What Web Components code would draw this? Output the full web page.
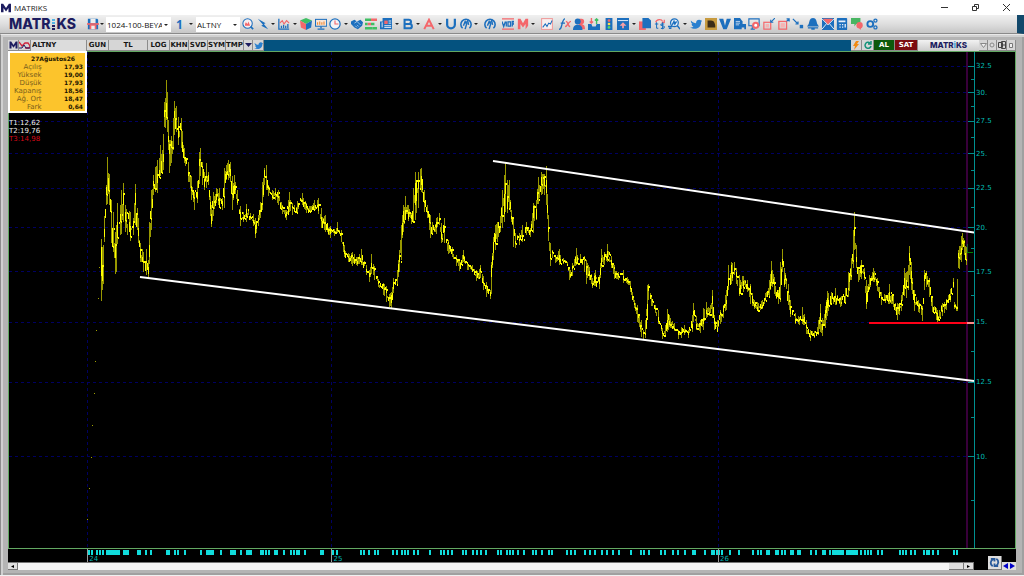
<!DOCTYPE html>
<html lang="tr">
<head>
<meta charset="utf-8">
<title>MATRIKS</title>
<style>
html,body{margin:0;height:100%}
body{font-family:"Open Sans","Noto Sans",sans-serif;background:#fff;overflow:hidden}
</style>
</head>
<body>
<matriks-app></matriks-app>
<script>
const NAVY='#1d1d60', BLUE='#1c6fbe', RED='#f4676b', GREEN='#3fbf63';

const define=(name,html,setup)=>customElements.define(name,class extends HTMLElement{
  constructor(){super();this.attachShadow({mode:'open'});}
  connectedCallback(){
    this.shadowRoot.innerHTML=typeof html==='function'?html(this):html;
    if(setup)setup(this,this.shadowRoot);
  }
});

const ICONS={
save:`<path d="M1 1h11l1 1v11H1z" fill="${BLUE}"/><path d="M4 1h6v5H4z" fill="#eee"/><path d="M3 8h8v5H3z" fill="${RED}"/><path d="M0 6h14v2H0z" fill="${RED}"/><path d="M5 9h4v4H5z" fill="#eee"/>`,
find:`<circle cx="6.500" cy="6.500" r="5.500" fill="#f6eef0" stroke="${BLUE}" stroke-width="1.200"/><path d="M3.500 9V7l1-2 2 2 1-3 2 5z" fill="${RED}"/><path d="M10 10l3 3" stroke="${BLUE}" stroke-width="2"/>`,
bolt:`<path d="M1 1l9 5-2 1 5 6-8-4 2-1z" fill="${BLUE}"/>`,
chart:`<path d="M1 1v12h12" fill="none" stroke="${BLUE}" stroke-width="1.500"/><path d="M4 12V9M6.500 12V8M9 12V9M11.500 12V7" stroke="${BLUE}" stroke-width="1.500"/><path d="M2 6l3-3 2 4 3-4 3 3" fill="none" stroke="${RED}" stroke-width="1.300"/>`,
cube:`<path d="M7 0l7 3-7 4-7-4z" fill="${GREEN}"/><path d="M0 3l7 4v7l-6-3z" fill="${RED}"/><path d="M14 3L7 7v7l6-3z" fill="${BLUE}"/>`,
board:`<rect x="0.600" y="1.600" width="13" height="8" fill="#f8e6d8" stroke="${BLUE}" stroke-width="1.200"/><path d="M3 8V5M5.500 8V4M8 8V5M10.500 8V4" stroke="#f09040" stroke-width="1.400"/><path d="M7 10v2M3 13h8" stroke="${BLUE}" stroke-width="1.600"/>`,
clock:`<circle cx="7" cy="7" r="6" fill="#f4f4f8" stroke="${BLUE}" stroke-width="1.400"/><path d="M7 3v4h4" fill="none" stroke="${RED}" stroke-width="1.300"/>`,
hands:`<path d="M0 4l4-2 3 2 4-2 3 3-1 4-5 4-4-2-4-4z" fill="${BLUE}"/><path d="M4 6l3-2 4 4M5 9l2 2M7 8l2 2" stroke="#d8e6f4" stroke-width=".8" fill="none"/>`,
bars:`<path d="M0 2h7M0 12h9" stroke="${GREEN}" stroke-width="3"/><path d="M7 2h7M3 7h4" stroke="${RED}" stroke-width="3"/><path d="M0 7h3M7 7h4M9 12h5" stroke="${GREEN}" stroke-width="3"/>`,
news:`<path d="M3 0h11v13H0V4h3z" fill="${BLUE}"/><path d="M5 3h4v4H5z" fill="${RED}"/><path d="M10 3.500h3M10 6h3M5 9h8M5 11h8M2.500 5v6" stroke="#fff"/>`,
B:`<path d="M3 2h5a2 2 0 0 1 0 5H3zM3 7h6a2.500 2.500 0 0 1 0 5H3z" fill="none" stroke="${BLUE}" stroke-width="2.400"/>`,
A:`<path d="M1.500 13L7 2l5.500 11M4 9h6" fill="none" stroke="${RED}" stroke-width="2.300"/>`,
U:`<path d="M2.500 1v7a4.500 4 0 0 0 9 0V1" fill="none" stroke="${BLUE}" stroke-width="2.600"/>`,
ring:`<path d="M3 12A6 6 0 1 1 11 12" fill="none" stroke="${BLUE}" stroke-width="1.800"/><path d="M4 9l2-5 1 2 2-3 1 5M8 6l-2 7" fill="none" stroke="${BLUE}" stroke-width="1.700"/>`,
viop:`<path d="M0 1h14M0 13h14" stroke="${RED}" stroke-width="1.400"/><path d="M0 4l2 6 2-6M5 4v6M12 10V4h2v3h-2" fill="none" stroke="${BLUE}" stroke-width="1.500"/><rect x="7" y="4.500" width="3" height="5" fill="none" stroke="${BLUE}" stroke-width="1.500"/>`,
M:`<path d="M1 1h3l3 5 3-5h3v8l-3 4V7l-3 4-3-4v6H1z" fill="${RED}"/>`,
line:`<rect x=".7" y=".7" width="12.600" height="12.600" fill="#f8f0f0" stroke="#ee9a9a" stroke-width="1.200"/><path d="M2 11l3-4 2 3 2-4 2 1 2-4" fill="none" stroke="${BLUE}" stroke-width="1.200"/>`,
fx:`<path d="M0 13c4 1 3-12 7-12M2 6h5" fill="none" stroke="${BLUE}" stroke-width="1.600"/><path d="M8 4c3 0 2 6 5 6M14 4c-3 0-4 6-7 6" stroke="${RED}" stroke-width="1.600" fill="none"/>`,
people:`<path d="M10 1a3 3 0 0 1 0 6c3 1 4 2 4 6H7V1z" fill="${RED}"/><circle cx="5.500" cy="4" r="3.500" fill="${BLUE}"/><path d="M0 14c0-5 3-6 5.500-6s5.500 1 5.500 6z" fill="${BLUE}"/>`,
inbox:`<path d="M0 7h4l1 3h4l1-3h4v7H0z" fill="${BLUE}"/><path d="M4 0v6M2 4l2 2 2-2" fill="none" stroke="${RED}" stroke-width="1.600"/><path d="M10 7V1M8 3l2-2 2 2" fill="none" stroke="${GREEN}" stroke-width="1.600"/>`,
light:`<rect x="3" y="0" width="8" height="14" fill="${BLUE}"/><circle cx="7" cy="3" r="1.600" fill="${RED}"/><circle cx="7" cy="7" r="1.600" fill="#ffe04a"/><circle cx="7" cy="11" r="1.600" fill="#59d95f"/>`,
upbox:`<path d="M0 0h14v14H0z" fill="${BLUE}"/><path d="M1 3h12" stroke="#fff"/><path d="M7 5l4 4H8v3H6V9H3z" fill="#f9a0a4"/>`,
docs:`<path d="M0 4h8v10H0z" fill="${RED}"/><path d="M4 0h7l3 3v9H4z" fill="${BLUE}"/>`,
swap:`<path d="M2 5c1-4 7-4 8-1M12 2v3H9" fill="none" stroke="${RED}" stroke-width="1.400"/><path d="M3 5v7M1 7h4M3 12h2M12 7c-5-1-5 2-2 2s3 4-2 3M10 5v8" fill="none" stroke="${BLUE}" stroke-width="1.200"/>`,
zoom:`<circle cx="7.500" cy="5.500" r="4.500" fill="#eef4fb" stroke="${BLUE}" stroke-width="1.500"/><path d="M5 8l2-4 1 3 2-3M11 9l3 4M0 10h5M1 12h3" fill="none" stroke="${BLUE}" stroke-width="1.700"/>`,
bird:`<path d="M0 11c2 .3 3-.1 4-1C2 9 2 8 2 7h1C1 6 1 4 1 3c2 2 4 3 6 3 0-4 4-5 6-3h1l-1 2c0 6-6 10-13 6z" fill="#2a80cf"/>`,
gold:`<path d="M0 0h14v14H0z" fill="#c79a3e"/><path d="M3 3h4c4 0 5 4 5 8H3z" fill="#3b2c18"/>`,
V:`<path d="M0 1h5l2 8 2-8h5L9 13H5z" fill="${BLUE}"/>`,
docfind:`<path d="M0 0h7l3 4v2L7 13H0z" fill="${BLUE}"/><path d="M2 4h5M2 6h5M2 8h4" stroke="#cfe0f2"/><path d="M8 13V8h2v2h1V8h2v5" fill="none" stroke="${BLUE}" stroke-width="2"/>`,
mongear:`<path d="M1 1h12v8H1zM3 13h5M5 9v4" fill="none" stroke="${BLUE}" stroke-width="1.300"/><circle cx="9" cy="8.500" r="3" fill="#fff" stroke="${RED}" stroke-width="2.400"/>`,
inward:`<rect x="1" y="5" width="8" height="8" fill="none" stroke="${RED}" stroke-width="1.400"/><rect x="3" y="7" width="4" height="4" fill="#f7b2b2"/><path d="M14 0L9 5M9 2v3h3" stroke="${BLUE}" stroke-width="1.300" fill="none"/>`,
outward:`<rect x="1" y="4" width="9" height="9" fill="none" stroke="${RED}" stroke-width="1.500"/><rect x="3" y="6" width="5" height="5" fill="#f7b2b2"/><path d="M10 4l3-3M10 1h3v3" stroke="${BLUE}" stroke-width="1.400" fill="none"/>`,
drag:`<path d="M1 1l6 6M4 7h3V4" fill="none" stroke="${BLUE}" stroke-width="1.400"/><path d="M9 8h4v4H9z" fill="${BLUE}"/>`,
bell:`<path d="M7 0c4 0 4 4 5 7l2 3H0l2-3c1-3 1-7 5-7z" fill="${BLUE}"/><path d="M1 11.500h12M5 13h4" stroke="${BLUE}" stroke-width="1.500"/>`,
mail:`<path d="M0 0h14v14H0z" fill="${BLUE}"/><path d="M1 1h12L7 8z" fill="${RED}"/><path d="M0 1l7 7 7-7M0 13l5-6M14 13L9 7" fill="none" stroke="#fff"/>`,
calc:`<rect x="1" y="0" width="12" height="14" rx="1" fill="${BLUE}"/><path d="M3 3h8v2H3zM4 7h1.500v1.500H4zM7 7h1.500v1.500H7zM10 7h1.500v4H10zM4 10h1.500v1.500H4zM7 10h1.500v1.500H7z" fill="#e8f0fa"/>`,
chat:`<path d="M0 0h11v7H6l-2 3V7H0z" fill="#48b562"/><circle cx="10" cy="8.500" r="3.700" fill="${RED}"/><path d="M9 11h3l-1 3z" fill="${RED}"/>`,
gears:`<circle cx="5" cy="7" r="3.400" fill="none" stroke="${BLUE}" stroke-width="2.200"/><circle cx="11" cy="3" r="1.800" fill="none" stroke="${BLUE}" stroke-width="1.500"/><circle cx="11" cy="11" r="1.800" fill="none" stroke="${BLUE}" stroke-width="1.500"/>`,
mark:`<path d="M0 13V1h3l4 6 4-6h3v12h-3.500V7L7 12 3.500 7v6z" fill="${NAVY}"/>`,
dots:`<path d="M0 0h3v2H0zM0 3h3v2H0z" fill="#52b4e6"/><path d="M0 6h3v2H0zM0 9h3v2H0z" fill="${NAVY}"/>`
};
const icon=(n,s=12)=>`<svg width="${s}" height="${s}" viewBox="0 0 14 14" aria-hidden="true">${ICONS[n]}</svg>`;

/* A toolbar button; "menu" adds the drop-down arrow. */
define('tool-button',el=>{
  const menu=el.hasAttribute('menu');
  return `<style>
  :host{display:block;flex:${menu?65:44} 1 0;min-width:0}
  button{all:unset;display:flex;width:100%;height:100%;align-items:center}
  svg{flex:none;margin:0 1px}
  i{margin-left:auto;margin-right:2px;border:2px solid transparent;border-top-color:#222;border-bottom:0}
  </style><button aria-label="${el.getAttribute('icon')}">${icon(el.getAttribute('icon'))}${menu?'<i></i>':''}</button>`;
});

/* Compact drop-down list used in the toolbar. */
define('tool-select',el=>`<style>
  :host{display:flex;flex:none;position:relative;background:#fff;height:15px}
  select{all:unset;box-sizing:border-box;width:100%;padding:0 9px 0 1px;font:8px/15px "Open Sans",sans-serif;color:#111;overflow:hidden;white-space:nowrap;text-overflow:clip}
  i{position:absolute;right:3px;top:7px;border:2px solid transparent;border-top-color:#222;border-bottom:0;pointer-events:none}
  </style><select aria-label="${el.getAttribute('label')}"><option>${el.getAttribute('value')}</option></select><i></i>`);

define('title-bar',`<style>
  :host{display:flex;height:15px;flex:none;align-items:center;background:#fff;color:#222;font-size:8px;line-height:15px;padding-right:2px}
  span{flex:1;padding-left:3px}
  .mark{flex:none;margin-left:1px}
  button{all:unset;width:31px;height:15px;display:grid;place-items:center}
  </style><svg class="mark" width="10" height="10" viewBox="0 0 14 14">${ICONS.mark}</svg><span>MATRIKS</span>
  <button aria-label="Simge durumu"><svg width="7" height="7"><path d="M0 3.500h7" stroke="#333"/></svg></button>
  <button aria-label="Geri yükle"><svg width="7" height="7" fill="none" stroke="#333"><path d="M.5 2.500h4v4h-4zM2.500 2V.5h4v4H5"/></svg></button>
  <button aria-label="Kapat"><svg width="7" height="7"><path d="M0 0l7 7M7 0L0 7" stroke="#333"/></svg></button>`);

const tools=`find bolt+ chart+ cube board clock+ hands bars news+ B+ A+ U ring+ | ring | viop M+ | line | fx people inbox light upbox+ docs swap zoom+ bird gold V docfind mongear inward outward drag bell mail calc chat gears`.split(' ');
define('main-toolbar',`<style>
  :host{display:flex;height:19px;flex:none;align-items:center;box-sizing:border-box;padding-left:9px;
    background:linear-gradient(#f0f0f0,#dedede 50%,#c6c6c6);border-right:7px solid #12486b;border-bottom:1px solid #8a8a8a}
  .logo{display:flex;flex:none;align-items:center;width:77px;color:${NAVY};font:800 14px/18px Inter,"Open Sans",sans-serif}
  .logo svg{margin:0 1px 0 2px}
  .save{flex:none;width:20px;height:15px}
  .list{width:65px}.num{flex:none;width:20px;display:flex;align-items:center;justify-content:space-between;margin-left:5px;color:${BLUE};font:700 12px/15px "Open Sans",sans-serif;box-sizing:border-box}
  .num i{margin-right:3px;border:2px solid transparent;border-top-color:#222;border-bottom:0}
  .sym{width:44px}
  nav{display:flex;flex:0 1 638px;height:15px;min-width:0;margin-left:1px}
  nav span{flex:9 1 0}
  </style>
  <div class="logo">MATR<svg width="3" height="11">${ICONS.dots}</svg>KS</div>
  <tool-button class="save" icon="save" menu></tool-button>
  <tool-select class="list" label="Sayfa" value="1024-100-BEYAZ"></tool-select>
  <div class="num">1<i></i></div>
  <tool-select class="sym" label="Sembol" value="ALTNY"></tool-select>
  <nav>${tools.map(t=>t==='|'?'<span></span>':`<tool-button icon="${t.replace('+','')}"${t.endsWith('+')?' menu':''}></tool-button>`).join('')}</nav>`);

define('chart-header',`<style>
  :host{display:flex;height:11px;flex:none;background:#04527f;font:700 7px/11px "DejaVu Sans",sans-serif;color:#161616}
  button,.icon{all:unset;box-sizing:border-box;height:11px;flex:none;display:grid;place-items:center;background:#d6d6d6;border-right:1px solid #8c8c8c;border-bottom:1px solid #8c8c8c;line-height:10px}
  input{all:unset;width:56px;height:11px;background:#dcdcdc;border-bottom:0;padding-left:1px;box-sizing:border-box;border-right:1px solid #8c8c8c}
  .w9{width:9px}.w10{width:10px}.w11{width:11px}.w12{width:12px}.w17{width:18px}.w19{width:19px}.w21{width:22px}.w39{width:39px}
  .gap{flex:1}
  .al{width:21px;background:#0c590c;color:#fff}.sat{width:23px;background:#7c0c10;color:#fff}
  .brand{width:61px;background:linear-gradient(#f2f2f2,#ccc);color:${NAVY};display:flex;align-items:center;justify-content:center;font:800 8px/11px Inter,"Open Sans",sans-serif}
  .brand b{color:#4fa8dc}
  </style>
  <span class="icon w11"><svg width="9" height="8" viewBox="0 0 14 14">${ICONS.mark}</svg></span>
  <span class="icon w12"><svg width="11" height="9" viewBox="0 0 11 9" fill="none"><path d="M0 1l3 4 3-3 3 0 2 3-1 2H6" stroke="#d0243c" stroke-width="1.300"/><path d="M0 7h3l2-3 2 3h4" stroke="${NAVY}"/></svg></span>
  <input aria-label="Sembol" value="ALTNY">
  <button class="w21">GUN</button><button class="w39">TL</button><button class="w21">LOG</button><button class="w19">KHN</button><button class="w19">SVD</button><button class="w17">SYM</button><button class="w17">TMP</button>
  <button class="w9" aria-label="Menü"><svg width="7" height="4"><path d="M0 0h7L3.500 4z" fill="${NAVY}"/></svg></button>
  <button class="w11" aria-label="Twitter"><svg width="9" height="9" viewBox="0 0 14 14">${ICONS.bird}</svg></button>
  <span class="gap"></span>
  <button class="w11" aria-label="Hızlı emir"><svg width="8" height="9" viewBox="0 0 8 9"><path d="M4 0h3L5 3h2L2 9l1-4H1z" fill="#f08a12"/></svg></button>
  <button class="w12" aria-label="Yenile"><svg width="8" height="8" viewBox="0 0 8 8"><path d="M6 2a3 3 0 1 0 1 3M7 0v3H4" fill="none" stroke="#14937a" stroke-width="1.500"/></svg></button>
  <button class="al">AL</button><button class="sat">SAT</button><span class="brand">MATR<b>i</b>KS</span>
  <button class="w9" aria-label="Küçült"><svg width="7" height="5"><path d="M.5.5h6l-3 4z" fill="#eee" stroke="#888"/></svg></button>
  <button class="w9" aria-label="Sabitle"><svg width="6" height="6"><circle cx="3" cy="3" r="2" fill="#ddd" stroke="#888"/></svg></button>
  <button class="w10" aria-label="Büyüt"><svg width="8" height="8" fill="none" stroke="#444"><path d="M.5 1.500h4v5h-4zM3.500.5h4v7h-4zM4 4h4"/></svg></button>
  <button class="w9" aria-label="Kapat"><svg width="6" height="7"><path d="M1.500 1.500h3v4h-3z" fill="#eee" stroke="#777"/></svg></button>`);

define('price-card',`<style>
  :host{display:block;box-sizing:border-box;width:79px;padding:2px 3px 1px 5px;border:1px solid #fff;outline:1px solid #fff;outline-offset:-2px;background:#fcc42c;color:#1c1400}
  table{border-collapse:collapse;width:100%}
  caption{font:700 6px/9px "DejaVu Sans",sans-serif;padding-left:9px}
  th{width:27px;padding:0;text-align:right;font:400 7px/8px "DejaVu Sans",sans-serif;color:#7a5f1c;white-space:nowrap}
  td{padding:0;text-align:right;font:700 6px/8px "DejaVu Sans",sans-serif}
  </style><table><caption>27Ağustos26</caption>
  ${[['Açılış','17,93'],['Yüksek','19,00'],['Düşük','17,93'],['Kapanış','18,56'],['Ağ. Ort','18,47'],['Fark','0,64']].map(r=>`<tr><th scope="row">${r[0]}</th><td>${r[1]}</td></tr>`).join('')}</table>`);

/* Price range [x, top, bottom] along the session axis. */
const RANGE=[
[101,239,301],[103,245,284],[104,216,242],[106,185,205],[107,157,204],[109,174,205],[111,200,243],[113,212,252],[115,232,274],[116,225,272],[117,203,244],[120,205,235],[121,190,234],[123,183,222],[125,205,232],[130,212,241],[133,218,235],[135,184,225],[137,208,230],[138,218,243],[140,243,262],[143,252,272],[146,249,275],[148,260,277],[149,222,264],[151,190,230],[153,175,195],[155,167,192],[157,160,193],[159,158,178],[160,145,176],[162,150,172],[163,134,170],[164,102,127],[165,98,128],[166,80,120],[167,92,132],[168,120,150],[169,140,173],[171,136,163],[173,118,150],[174,101,135],[176,106,132],[178,117,145],[181,118,148],[184,148,163],[188,162,182],[191,176,200],[194,192,210],[197,181,203],[199,152,184],[200,148,176],[202,162,185],[204,172,190],[206,163,188],[208,172,185],[210,196,216],[211,205,227],[213,192,216],[216,188,203],[219,188,208],[222,198,210],[224,168,208],[226,165,180],[228,160,180],[230,162,182],[232,176,210],[234,175,194],[237,190,205],[240,206,226],[243,212,222],[246,204,222],[250,213,220],[253,214,226],[255,218,238],[258,215,226],[260,202,218],[262,182,210],[264,168,185],[266,165,190],[268,185,196],[272,190,200],[275,188,200],[278,190,205],[282,205,214],[286,210,220],[289,192,212],[292,203,215],[297,201,212],[302,193,205],[306,203,213],[310,206,213],[314,200,209],[318,198,214],[321,208,228],[325,215,232],[330,226,238],[334,229,236],[337,222,233],[341,230,242],[344,245,257],[348,253,262],[352,252,266],[357,257,266],[361,249,265],[366,265,275],[369,270,282],[371,254,274],[374,266,280],[378,279,287],[383,283,295],[386,286,302],[389,294,307],[391,292,308],[393,278,293],[397,270,285],[399,250,272],[401,225,260],[403,205,232],[405,196,220],[408,205,221],[411,213,224],[413,188,223],[415,172,220],[418,172,208],[420,169,190],[421,168,192],[424,190,212],[427,205,218],[430,215,238],[432,222,234],[436,218,234],[439,213,225],[441,223,243],[444,218,243],[448,240,254],[452,247,257],[456,255,266],[459,260,271],[463,250,262],[467,262,270],[472,265,272],[476,270,281],[480,265,278],[483,276,290],[486,282,297],[490,290,299],[491,262,294],[493,237,260],[495,225,250],[497,222,242],[500,216,232],[502,190,228],[504,175,222],[505,163,212],[507,180,213],[509,180,208],[511,210,222],[513,218,247],[515,233,248],[519,233,245],[522,225,242],[526,222,235],[530,228,237],[533,203,233],[536,200,220],[538,177,204],[541,172,195],[544,174,195],[546,166,205],[548,215,241],[550,243,266],[552,250,258],[555,257,263],[559,249,265],[563,258,264],[567,262,266],[569,268,280],[572,263,276],[576,248,265],[580,254,263],[584,256,272],[586,260,284],[589,267,280],[592,278,288],[595,270,286],[599,275,289],[601,249,268],[604,252,265],[607,244,262],[611,256,268],[614,265,279],[618,272,280],[623,270,283],[627,277,284],[630,281,292],[634,300,308],[637,305,322],[641,320,337],[643,330,339],[645,320,338],[647,285,320],[648,284,300],[651,295,306],[655,305,313],[658,310,324],[662,328,339],[665,325,335],[667,309,332],[670,318,328],[674,323,331],[678,330,339],[681,327,338],[684,325,335],[688,330,338],[692,315,332],[693,303,322],[696,316,330],[700,320,333],[703,308,330],[706,302,318],[709,308,316],[712,290,318],[714,315,330],[717,320,332],[720,310,324],[723,305,318],[726,290,310],[728,265,290],[731,262,284],[734,262,275],[736,268,284],[739,275,296],[743,276,292],[747,280,292],[750,284,304],[754,300,309],[758,303,311],[762,300,309],[765,293,301],[769,280,298],[771,261,286],[774,277,294],[778,290,304],[780,262,302],[782,249,272],[784,268,287],[788,284,305],[790,300,317],[795,313,324],[799,317,325],[802,307,324],[806,320,334],[810,330,341],[814,331,338],[818,320,335],[820,304,332],[822,318,336],[825,306,328],[827,291,316],[831,292,305],[835,288,305],[840,297,307],[845,288,303],[848,272,297],[851,258,280],[853,230,268],[854,212,250],[856,245,268],[858,268,282],[861,260,279],[864,268,280],[866,280,309],[869,275,290],[873,268,282],[877,278,291],[881,292,305],[885,295,303],[889,284,304],[893,294,307],[897,303,320],[901,295,311],[904,268,296],[906,272,298],[908,265,290],[909,246,275],[911,262,290],[914,290,311],[918,300,312],[922,306,321],[924,270,290],[926,271,287],[929,278,297],[932,298,312],[936,308,320],[937,310,324],[942,303,316],[946,299,310],[950,289,302],[953,278,288],[954,302,309],[956,306,311],[957,279,311],[958,250,268],[959,246,269],[961,236,262],[962,233,250],[964,240,255],[966,247,265]];

/* Wicks are one pixel wide; bodies step sideways in blocks of one to three pixels. */
function candles(){
  let seed=9127,dim='',lit='';
  const rnd=()=>(seed=(seed*1103515245+12345)&0x7fffffff)/0x7fffffff;
  let held=0,a=0,b=0;
  for(let k=0;k<RANGE.length;k++){
    const [x0,h0,l0]=RANGE[k],[x1,h1,l1]=RANGE[k+1]||[x0+1,h0,l0];
    for(let x=x0;x<x1;x++){
      const t=(x-x0)/(x1-x0),h=h0+(h1-h0)*t,l=l0+(l1-l0)*t,s=l-h;
      const key=x===x0,top=key?h:h+s*rnd()*.6,bot=key?l:l-s*rnd()*.5;
      if(key||rnd()<.7)dim+=`M${x}.5 ${Math.round(top)}V${Math.round(Math.max(bot,top+2))}`;
      if(held<=0||a<h-2||b>l+2){
        held=1+Math.floor(rnd()*3);
        a=Math.round(h+s*(.1+rnd()*.5));
        b=Math.round(Math.min(l,a+Math.max(2,s*(.2+rnd()*.3))));
        lit+=`M${x} ${a}h1V${b}h-1z`;
      }else lit+=`M${x} ${rnd()<.5?a:b-1}h1v2h-1z`;
      held--;
    }
  }
  return `<path d="${dim}" stroke="#989800"/><path d="${lit}" fill="#ff0"/>`;
}
const priceY=p=>Math.round(457-Math.log(p/10)*331)-.5;
const LEVELS=[32.5,30,27.5,25,22.5,20,17.5,15,12.5,10];
const MINOR=[31.25,28.75,26.25,23.75,21.25,18.75,16.25,13.75,11.25,8.75];

define('price-chart',`<style>
  :host{display:flex;flex:1;min-height:0;position:relative;background:#000;border:1px solid #62a862;box-sizing:border-box}
  .plot{flex:1;min-width:0;height:100%;display:block}
  .axis{flex:none;width:41px;position:relative;border-left:1px solid #009090;box-sizing:border-box;color:#00bcb4;font:7px/8px "DejaVu Sans",sans-serif}
  .axis span{position:absolute;left:1px;margin-top:-4px}
  .info{position:absolute;left:0;top:0}
  price-card{margin-top:-1px;margin-left:-1px}
  p{margin:0;font:7px/8px "DejaVu Sans",sans-serif;color:#eee}
  .stops{padding-top:6px}
  .stop{color:#d80a18}
  </style>
  <svg class="plot" viewBox="9 52 965 496" preserveAspectRatio="none" fill="none" role="img" aria-label="ALTNY fiyat grafiği">
  <g stroke="#000062" stroke-dasharray="3 3">${LEVELS.map(p=>`<path d="M9 ${priceY(p)}H967"/>`).join('')}<path d="M87.500 52V548"/><path d="M331.500 52V548"/><path d="M718.500 52V548"/></g>
  <path d="M967 52V548" stroke="#38003a" stroke-width="2"/>
  <g stroke="#008c8c">${LEVELS.map(p=>`<path d="M968 ${priceY(p)}h6"/>`).join('')}${MINOR.map(p=>`<path d="M971 ${priceY(p)}h3"/>`).join('')}</g>
  <g fill="#a3a300">${[[96,330],[95,361],[94,393],[92,425],[91,457],[89,488],[87,519],[99,267],[98,298]].map(([x,y])=>`<path d="M${x} ${y}h1v1h-1z"/>`).join('')}</g>
  ${candles()}
  <path d="M493 161L974 232.500M140 277L974 381" stroke="#fff" stroke-width="2"/>
  <path d="M869 323H967" stroke="#ff0018" stroke-width="2"/><path d="M967 323h7" stroke="#f88" stroke-width="2"/>
  <path d="M967.500 244V252" stroke="#1c5c30" stroke-width="1"/><path d="M967 252.500h6" stroke="#008000"/>
  </svg>
  <div class="axis">${LEVELS.map(p=>`<span style="top:${((priceY(p)-52)/4.96).toFixed(1)}%">${p%1?p:p+'.'}</span>`).join('')}</div>
  <div class="info"><price-card></price-card><div class="stops"><p>T1:12,62</p><p>T2:19,76</p><p class="stop">T3:14,98</p></div></div>`);

const EVENTS=[88,91,96,99,102,106,108,110,112,114,116,118,123,125,127,137,139,145,150,166,168,174,177,184,200,206,208,210,212,220,230,232,234,240,246,248,250,260,262,265,268,274,276,283,290,293,296,298,304,320,322,332,336,360,363,368,374,377,392,396,401,404,407,413,417,429,440,443,447,451,462,465,472,476,480,485,497,500,506,509,512,517,523,532,535,541,548,551,566,570,574,584,589,594,601,606,612,618,630,640,643,648,660,664,672,677,684,692,694,704,711,713,716,718,721,729,738,752,757,760,766,768,775,777,781,784,790,792,797,799,810,815,822,824,829,832,834,836,838,840,842,846,848,850,852,854,856,860,864,867,870,877,881,899,902,905,910,914,923,926,928,932,937,953,956];
define('time-axis',`<style>
  :host{display:flex;flex:none;background:#000}
  .left{flex:1;min-width:0}
  .dates{position:relative;height:14px;color:#00b4b4;font:7px/8px "DejaVu Sans",sans-serif;border-bottom:1px solid #777;box-sizing:border-box}
  .dates svg{display:block;width:100%;height:13px}
  .dates span{position:absolute;top:6px;padding-left:1px}
  .scroll{display:flex;height:7px;background:#f6f6f6;justify-content:space-between}
  button{all:unset;box-sizing:border-box;display:grid;place-items:center;background:#dedede;border-right:1px solid #777;border-bottom:1px solid #777}
  .scroll button{width:10px;height:7px}
  .scroll .thumb{width:15px;margin-left:auto}
  .scroll svg,.tail svg{display:block}
  .tail{flex:none;width:42px;display:flex;align-items:flex-end;justify-content:flex-end}
  .sync{width:14px;height:14px}.nav{width:7px;height:8px;border:0}
  </style>
  <div class="left"><div class="dates"><svg viewBox="8 0 966 13" preserveAspectRatio="none">
  ${EVENTS.map(x=>`<path d="M${x} 1h2v5h-2z" fill="#10dcdc"/>`).join('')}
  <path d="M87.500 0v13M331.500 0v13M718.500 0v13" stroke="#999"/></svg>
  <span style="left:8.3%">24</span><span style="left:33.6%">25</span><span style="left:73.6%">26</span></div>
  <div class="scroll"><button aria-label="Geri"><svg width="3" height="3"><path d="M3 0v3L0 1.500z"/></svg></button><button class="thumb" aria-label="Kaydır"></button><button aria-label="İleri"><svg width="3" height="3"><path d="M0 0v3l3-1.500z"/></svg></button></div></div>
  <div class="tail"><button class="sync" aria-label="Yenile"><svg width="11" height="11" viewBox="0 0 12 12" fill="none" stroke="#285a9c" stroke-width="2"><path d="M4 10C1 8 1 4 5 2M2 2h4v3M8 2c3 2 3 6-1 8M10 10H6V7"/></svg></button>
  <button class="nav" aria-label="Önceki"><svg width="5" height="6"><path d="M5 0v6L0 3z" fill="#0000c8"/></svg></button><button class="nav" aria-label="Sonraki"><svg width="5" height="6"><path d="M0 0v6l5-3z" fill="#0000c8"/></svg></button></div>`);

define('chart-window',`<style>
  :host{display:flex;flex:1;min-height:0;flex-direction:column;box-sizing:border-box;padding:5px 8px 5px 7px;background:#b4b4b4;
   border-left:1px solid #8c8c8c;border-top:1px solid #e8e8e8;box-shadow:inset 2px 2px #d0d0d0,inset -2px -2px #a0a0a0}
  </style><slot></slot>`);

define('matriks-app',`<style>
  :host{display:flex;flex-direction:column;height:100vh;box-sizing:border-box;border-bottom:1px solid #f0f0f0}
  </style><title-bar></title-bar><main-toolbar></main-toolbar>
  <chart-window><chart-header></chart-header><price-chart></price-chart><time-axis></time-axis></chart-window>`);
</script>
</body>
</html>
